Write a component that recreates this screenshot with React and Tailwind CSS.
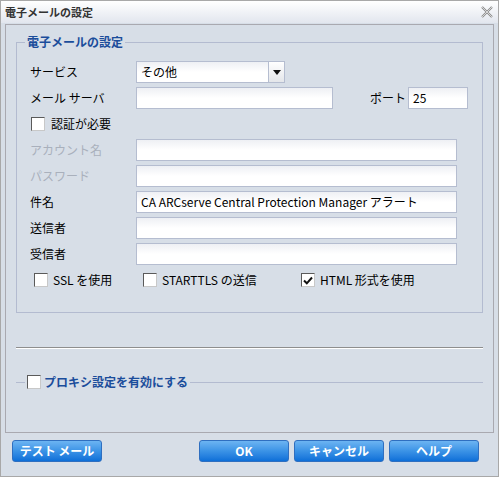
import { useState } from "react";

const font = { fontFamily: '"Noto Sans CJK JP", "Noto Sans", sans-serif' };

function Checkbox({ checked, onChange }) {
  return (
    <button
      type="button"
      onClick={onChange}
      className="flex h-[14px] w-[14px] shrink-0 items-center justify-center border border-t-[#5a5a5a] border-l-[#5a5a5a] border-b-[#c8c8c8] border-r-[#c8c8c8] bg-white"
    >
      {checked && (
        <svg width="10" height="9" viewBox="0 0 10 9">
          <path d="M1 4.5 L3.8 7.3 L9 1.5" fill="none" stroke="#111" strokeWidth="2" />
        </svg>
      )}
    </button>
  );
}

function TextBox({ value, className = "" }) {
  return (
    <div
      className={`flex h-[22px] items-center border border-[#b5bdd0] bg-gradient-to-b from-[#eef0f4] via-white to-white px-[4px] text-[12px] text-black ${className}`}
    >
      {value}
    </div>
  );
}

function Row({ label, disabled, value }) {
  return (
    <div className="flex h-[22px] items-center">
      <span className={`w-[106px] text-[12px] ${disabled ? "text-[#a9b0bc]" : "text-black"}`}>
        {label}
      </span>
      <TextBox value={value} className="w-[321px]" />
    </div>
  );
}

function BlueButton({ children, className = "" }) {
  return (
    <button
      type="button"
      className={`h-[22px] rounded-[3px] border border-[#2f6fc0] bg-gradient-to-b from-[#6cb4f2] via-[#3b93e6] via-50% to-[#0c6fd8] text-[12px] font-bold text-white ${className}`}
    >
      {children}
    </button>
  );
}

export default function App() {
  const [auth, setAuth] = useState(false);
  const [ssl, setSsl] = useState(false);
  const [tls, setTls] = useState(false);
  const [html, setHtml] = useState(true);
  const [proxy, setProxy] = useState(false);

  return (
    <div
      style={font}
      className="flex h-[477px] w-[499px] flex-col border border-[#a8a8a8] bg-[#d7dee7] select-none"
    >
      <div className="flex h-[22px] shrink-0 items-center justify-between bg-gradient-to-b from-white to-[#e2e6ee] pl-[4px] pr-[4px]">
        <span className="text-[11px] font-bold text-[#333]">電子メールの設定</span>
        <svg width="12" height="12" viewBox="0 0 12 12" className="mr-[1px]">
          <path d="M1 1 L11 11 M11 1 L1 11" stroke="#8a8a8a" strokeWidth="2.2" />
          <path d="M1 1 L11 11 M11 1 L1 11" stroke="#e8e8e8" strokeWidth="0.8" />
        </svg>
      </div>

      <div className="mx-[4px] mt-[1px] flex h-[409px] flex-col border border-[#a9a9b0] px-[10px] pt-[8px]">
        <fieldset className="h-[280px] border border-[#b3bbd0]">
          <legend className="ml-[8px] px-[2px] text-[12px] font-bold text-[#1b4d9b]">
            電子メールの設定
          </legend>
          <div className="mt-[10px] flex flex-col gap-[4px] pl-[13px]">
            <div className="flex h-[22px] items-center">
              <span className="w-[106px] text-[12px]">サービス</span>
              <div className="flex h-[22px] w-[149px]">
                <TextBox value="その他" className="flex-1" />
                <div className="flex w-[16px] items-center justify-center border border-l-0 border-[#b5bdd0] bg-gradient-to-b from-white to-[#e4e6ea]">
                  <svg width="8" height="5" viewBox="0 0 8 5">
                    <path d="M0 0 H8 L4 5 Z" fill="#111" />
                  </svg>
                </div>
              </div>
            </div>
            <div className="flex h-[22px] items-center">
              <span className="w-[106px] text-[12px]">メール サーバ</span>
              <TextBox className="w-[197px]" />
              <span className="ml-[37px] w-[38px] text-[12px]">ポート</span>
              <TextBox value="25" className="w-[60px]" />
            </div>
            <div className="flex h-[22px] items-center gap-[6px] pl-[1px]">
              <Checkbox checked={auth} onChange={() => setAuth(!auth)} />
              <span className="text-[12px]">認証が必要</span>
            </div>
            <Row label="アカウント名" disabled />
            <Row label="パスワード" disabled />
            <Row label="件名" value="CA ARCserve Central Protection Manager アラート" />
            <Row label="送信者" />
            <Row label="受信者" />
            <div className="flex h-[22px] items-center pl-[4px] text-[12px]">
              <div className="flex w-[109px] items-center gap-[5px]">
                <Checkbox checked={ssl} onChange={() => setSsl(!ssl)} />
                <span>SSL を使用</span>
              </div>
              <div className="flex w-[158px] items-center gap-[5px]">
                <Checkbox checked={tls} onChange={() => setTls(!tls)} />
                <span>STARTTLS の送信</span>
              </div>
              <div className="flex items-center gap-[5px]">
                <Checkbox checked={html} onChange={() => setHtml(!html)} />
                <span>HTML 形式を使用</span>
              </div>
            </div>
          </div>
        </fieldset>

        <div className="mt-[34px] h-[2px] border-t border-[#8e8e8e] border-b border-b-white" />

        <fieldset className="mt-[24px] border-t border-[#b3bbd0]">
          <legend className="ml-[9px] flex items-center gap-[3px] px-[2px]">
            <Checkbox checked={proxy} onChange={() => setProxy(!proxy)} />
            <span className="text-[12px] font-bold text-[#1b4d9b]">プロキシ設定を有効にする</span>
          </legend>
        </fieldset>
      </div>

      <div className="flex items-center pl-[11px] pr-[19px] pt-[7px]">
        <BlueButton className="w-[90px]">テスト メール</BlueButton>
        <div className="ml-auto flex gap-[5px]">
          <BlueButton className="w-[90px]">OK</BlueButton>
          <BlueButton className="w-[90px]">キャンセル</BlueButton>
          <BlueButton className="w-[90px]">ヘルプ</BlueButton>
        </div>
      </div>
    </div>
  );
}
